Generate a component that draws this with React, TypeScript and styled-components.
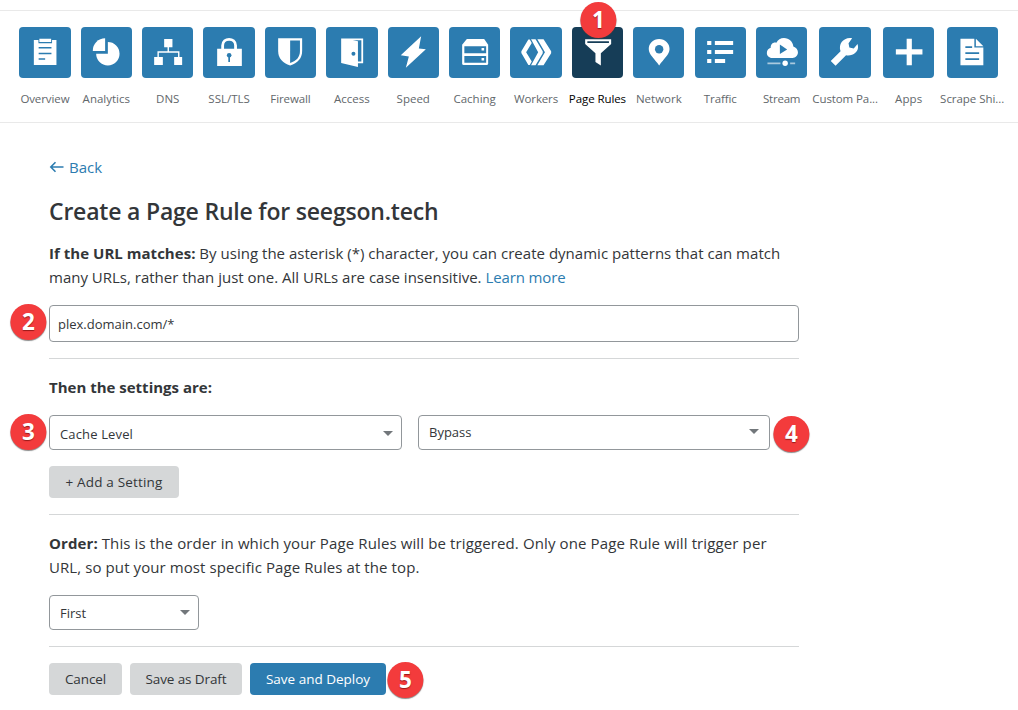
import React from 'react';
import styled, { createGlobalStyle } from 'styled-components';

const blue = '#2c7cb0';
const navy = '#163d57';

const GlobalStyle = createGlobalStyle`
  * { box-sizing: border-box; }
  body {
    margin: 0;
    background: #fff;
    color: #333639;
    font-family: 'Open Sans', 'Noto Sans', sans-serif;
    font-size: 15px;
    line-height: 24px;
  }
`;

const Page = styled.div`
  width: 1018px;
  height: 710px;
  overflow: hidden;
  padding-top: 10px;
`;

const Nav = styled.nav`
  display: flex;
  height: 113px;
  padding: 16px 0 0 14.22px;
  border-top: 1px solid #e9e9e9;
  border-bottom: 1px solid #e9e9e9;
`;

const NavItem = styled.a<{ $wide?: boolean; $active?: boolean }>`
  position: relative;
  flex: none;
  display: flex;
  flex-direction: column;
  align-items: center;
  width: ${p => (p.$wide ? 65.7 : 61.4)}px;
  color: ${p => (p.$active ? '#000' : '#62676b')};
`;

const Tile = styled.svg<{ $active?: boolean }>`
  width: 51.3px;
  height: 51px;
  border-radius: 4px;
  background: ${p => (p.$active ? navy : blue)};
  color: ${p => (p.$active ? navy : blue)};
`;

const NavLabel = styled.span<{ $ls: number }>`
  margin-top: 12px;
  font-size: 11.5px;
  line-height: 18px;
  white-space: nowrap;
  letter-spacing: ${p => p.$ls}px;
`;

const Content = styled.main`
  width: 750px;
  margin: 32px 0 0 49px;
`;

const BackLink = styled.a`
  display: flex;
  align-items: center;
  gap: 5px;
  height: 24px;
  color: ${blue};

  svg {
    margin-bottom: 1px;
  }
`;

const Title = styled.h1`
  margin: 16px 0 13px;
  font-size: 23px;
  font-weight: 600;
  line-height: 33px;
  white-space: nowrap;
`;

const Paragraph = styled.p`
  margin: 0;
  white-space: nowrap;
`;

const Run = styled.span<{ $ls?: number }>`
  letter-spacing: ${p => p.$ls ?? 0}px;
`;

const Strong = styled.strong<{ $ls?: number }>`
  font-weight: 700;
  letter-spacing: ${p => p.$ls ?? 0}px;
`;

const Link = styled.a`
  color: ${blue};
  letter-spacing: -0.12px;
`;

const Anchor = styled.div`
  position: relative;
`;

const UrlInput = styled.div`
  display: flex;
  align-items: center;
  height: 37px;
  margin-top: 16px;
  padding: 1px 8px 0;
  border: 1px solid #92979b;
  border-radius: 4px;
  font-size: 13px;
`;

const Rule = styled.hr`
  height: 1px;
  margin: 16px 0;
  border: 0;
  background: #d5d7d8;
`;

const SelectRow = styled.div`
  position: relative;
  display: flex;
  gap: 16px;
  margin: 16px 0;
`;

const Select = styled.div<{ $width: number; $pad?: string }>`
  display: flex;
  align-items: center;
  justify-content: space-between;
  width: ${p => p.$width}px;
  height: 35px;
  padding: ${p => p.$pad ?? '3px 8px 0 10px'};
  border: 1px solid #92979b;
  border-radius: 4px;
  font-size: 13px;
`;

const Caret = styled.svg<{ $lift: number }>`
  width: 10px;
  height: 5px;
  margin-bottom: ${p => p.$lift}px;
`;

const Button = styled.button<{ $width: number; $primary?: boolean }>`
  width: ${p => p.$width}px;
  height: 32px;
  padding: 0;
  border: 0;
  border-radius: 4px;
  background: ${p => (p.$primary ? blue : '#d5d7d8')};
  color: ${p => (p.$primary ? '#fff' : '#333639')};
  font: 13.5px/32px 'Open Sans', sans-serif;
  white-space: nowrap;
`;

const Actions = styled.div`
  position: relative;
  display: flex;
  gap: 8px;
`;

const Badge = styled.span<{ $x: number; $y: number }>`
  position: absolute;
  left: ${p => p.$x}px;
  top: ${p => p.$y}px;
  width: 36px;
  height: 36px;
  border-radius: 50%;
  background: #f33b3c;
  box-shadow: 0 1px 1px rgba(60, 60, 60, 0.6);
  color: #fff;
  font-size: 22.5px;
  font-weight: 700;
  line-height: 35px;
  text-align: center;
  text-shadow: 0 1px 1px rgba(90, 0, 0, 0.6);
  transform: translateX(0.4px);
`;

const icons: Record<string, React.ReactNode> = {
  overview: (
    <>
      <path d="M14.7 13H37.3V38H14.7z" />
      <path d="M19.3 11H32.9V16.2H19.3z" fill="currentColor" />
      <path d="M20.2 11.8H32V15H20.2z" />
      <path d="M19.5 20.7H32.3M19.5 26.5H32.3M19.5 32H26" stroke="currentColor" strokeWidth="1.6" />
    </>
  ),
  analytics: (
    <>
      <path d="M24 11.3V23.9H11.6A12.4 12.4 0 0 1 24 11.3z" />
      <path d="M26.7 15A11.7 11.7 0 1 1 15 26.7H26.7z" />
    </>
  ),
  dns: (
    <>
      <path d="M22 12H30.3V20.2H22zM12 30H20.7V38H12zM32 30H40V38H32z" />
      <path d="M26.1 20V25M16 30V25H36.6V30" fill="none" stroke="#fff" strokeWidth="1.4" />
    </>
  ),
  lock: (
    <>
      <path d="M14 21.7H38.7V39H14z" />
      <path d="M19.5 22V18.5C19.5 10.2 32.4 10.2 32.4 18.5V22" fill="none" stroke="#fff" strokeWidth="2.8" />
      <circle cx="26" cy="28.2" r="2.3" fill="currentColor" />
      <path d="M26 28V35" stroke="currentColor" strokeWidth="1.7" />
    </>
  ),
  shield: (
    <>
      <path d="M13 11.3H37V24C37 31.5 32.5 36 25 38.4C17.5 36 13 31.5 13 24z" />
      <path d="M25 13.5H34.8V24C34.8 30 31.5 33.7 25 36z" fill="currentColor" />
    </>
  ),
  door: (
    <>
      <path d="M15 11.4H37V36.2H31V34.4H35.2V13.2H24V12.8L31.8 14.3V40L15 36z" />
      <circle cx="27.3" cy="26.7" r="2" fill="currentColor" />
    </>
  ),
  bolt: <path d="M33 9.3L30.7 21.6L37.7 22.2L17.7 40.7L20.7 29.6L12.6 28.3z" />,
  drive: (
    <>
      <path d="M17.7 12H35L39 17.8V36.5Q39 38 37.5 38H14.5Q13 38 13 36.5V17.8z" />
      <path d="M15.2 19.2H37V26.2H15.2zM15.2 29H37V35.8H15.2z" fill="currentColor" />
      <path d="M32.4 21H35V23.6H32.4zM32.4 31H35V33.6H32.4z" />
    </>
  ),
  workers: (
    <>
      <path d="M18.2 12.6H19.6L21.6 16L16 25.2L21.6 34.6L19.6 38H18.2L11.2 26V24.3z" />
      <path d="M20.9 12.3H25.4L32.6 24.2V26.2L25.4 38.2H20.9L28 25.3z" />
      <path d="M27.2 12.3H33.4L41 24.2V26.2L33.4 38.2H27.2L34.8 25.3z" />
    </>
  ),
  funnel: (
    <>
      <path d="M13 12.3H39V17L28.7 26.2V38.4L23.3 35V26.2L13 17z" />
      <path d="M15.2 14.2H36.8V16H15.2z" fill="currentColor" />
    </>
  ),
  pin: (
    <>
      <path d="M26 11.9C32 11.9 36.4 16.3 36.4 22C36.4 27.5 30.5 32 26 38.4C21.5 32 15.6 27.5 15.6 22C15.6 16.3 20 11.9 26 11.9z" />
      <circle cx="26" cy="22.2" r="4.2" fill="currentColor" />
    </>
  ),
  list: <path d="M12 14H16.2V18H12zM19.7 14H38V18H19.7zM12 23H16.2V27H12zM19.7 23H38V27H19.7zM12 32H16.2V36H12zM19.7 32H30V36H19.7z" />,
  stream: (
    <>
      <path d="M16 31C12.8 31 10.7 28.6 10.7 26C10.7 23.3 12.5 21.3 14.6 20.8C14.2 17.3 17.3 14.8 20.2 15.8C21.7 12.6 24.4 10.9 27.8 10.9C33 10.9 36.8 14.6 37.2 19.4C40 20.3 41.8 22.5 41.8 25.3C41.8 28.6 39.3 31 36.4 31z" />
      <path d="M23.7 17.6L31 22.4L23.7 27.1z" fill="currentColor" />
      <path d="M11.3 36.3H24.3M34 36.3H39" stroke="#fff" strokeOpacity="0.6" strokeWidth="1.8" />
      <circle cx="29" cy="36.3" r="2.7" />
    </>
  ),
  wrench: (
    <path d="M33 11.3L29.4 16.2L30.2 20.4L34.6 21.4L38.4 16.9C39.6 20.3 38.8 23.6 36.2 25.8C33.8 27.9 30.5 28.9 26.9 28.3L16.4 38.7L11.6 34L21.4 24.2C18.8 17 24.6 9.8 33 11.3z" />
  ),
  plus: <path d="M23.5 11.7H28.7V22.3H39.3V27.6H28.7V38.3H23.5V27.6H12.7V22.3H23.5z" />,
  doc: (
    <>
      <path d="M13.3 11.7H27.2V20.6H36.2V38.2H13.3z" />
      <path d="M28.7 11.7L36.2 19.2H28.7z" />
      <path d="M18.2 20.2H25M18.2 26.2H32M18.2 32.1H32" stroke="currentColor" strokeWidth="1.7" />
    </>
  ),
};

type Entry = { icon: string; label: string; ls?: number; wide?: boolean; active?: boolean };

const entries: Entry[] = [
  { icon: 'overview', label: 'Overview', ls: -0.1 },
  { icon: 'analytics', label: 'Analytics' },
  { icon: 'dns', label: 'DNS' },
  { icon: 'lock', label: 'SSL/TLS' },
  { icon: 'shield', label: 'Firewall', ls: -0.1 },
  { icon: 'door', label: 'Access' },
  { icon: 'bolt', label: 'Speed' },
  { icon: 'drive', label: 'Caching' },
  { icon: 'workers', label: 'Workers', ls: -0.15 },
  { icon: 'funnel', label: 'Page Rules', ls: -0.08, active: true },
  { icon: 'pin', label: 'Network' },
  { icon: 'list', label: 'Traffic', ls: -0.12 },
  { icon: 'stream', label: 'Stream', ls: -0.2 },
  { icon: 'wrench', label: 'Custom Pa...', ls: -0.1, wide: true },
  { icon: 'plus', label: 'Apps', ls: 0.1 },
  { icon: 'doc', label: 'Scrape Shi...', ls: -0.04, wide: true },
];

const DropArrow = ({ lift = 2 }: { lift?: number }) => (
  <Caret viewBox="0 0 10 5" $lift={lift}>
    <path d="M0 0H10L5 5z" fill="#72777b" />
  </Caret>
);

export default function App() {
  return (
    <Page>
      <GlobalStyle />
      <Nav>
        {entries.map(e => (
          <NavItem key={e.label} $wide={e.wide} $active={e.active}>
            <Tile viewBox="0 0 51 51" fill="#fff" $active={e.active}>
              {icons[e.icon]}
            </Tile>
            {e.active && <Badge $x={13.2} $y={-25.5}>1</Badge>}
            <NavLabel $ls={e.ls ?? 0}>{e.label}</NavLabel>
          </NavItem>
        ))}
      </Nav>
      <Content>
        <BackLink>
          <svg width="15" height="12" viewBox="0 0 15 12" fill="none" stroke={blue} strokeWidth="1.6">
            <path d="M14.5 6H2M6.5 1.2L1.8 6L6.5 10.8" />
          </svg>
          <Run>Back</Run>
        </BackLink>
        <Title>
          <Run $ls={-0.2}>Create a Page Rule for seegson.tech</Run>
        </Title>
        <Paragraph>
          <Strong $ls={0.03}>If the URL matches:</Strong>{' '}
          <Run $ls={0.02}>By using the asterisk (*) character, you can create dynamic patterns that can match</Run>
          <br />
          <Run>many URLs, rather than just one. All URLs are case insensitive.</Run>{' '}
          <Link>Learn more</Link>
        </Paragraph>
        <Anchor>
          <Badge $x={-39} $y={-1}>2</Badge>
          <UrlInput>
            <Run>plex.domain.com/*</Run>
          </UrlInput>
        </Anchor>
        <Rule />
        <Paragraph>
          <Strong>Then the settings are:</Strong>
        </Paragraph>
        <SelectRow>
          <Badge $x={-39} $y={-1}>3</Badge>
          <Select $width={353}>
            <Run $ls={0.14}>Cache Level</Run>
            <DropArrow />
          </Select>
          <Select $width={352} $pad="0 10px 1px">
            <Run>Bypass</Run>
            <DropArrow lift={1} />
          </Select>
          <Badge $x={724} $y={1}>4</Badge>
        </SelectRow>
        <Button $width={130}>
          <Run $ls={0.17}>+ Add a Setting</Run>
        </Button>
        <Rule />
        <Paragraph>
          <Strong $ls={0.1}>Order:</Strong>{' '}
          <Run $ls={0.12}>This is the order in which your Page Rules will be triggered. Only one Page Rule will trigger per</Run>
          <br />
          <Run $ls={0.09}>URL, so put your most specific Page Rules at the top.</Run>
        </Paragraph>
        <SelectRow>
          <Select $width={150} $pad="1px 8px 0 10px">
            <Run>First</Run>
            <DropArrow lift={1} />
          </Select>
        </SelectRow>
        <Rule />
        <Actions>
          <Button $width={73}>
            <Run $ls={-0.1}>Cancel</Run>
          </Button>
          <Button $width={112}>
            <Run $ls={-0.1}>Save as Draft</Run>
          </Button>
          <Button $width={136} $primary>
            <Run>Save and Deploy</Run>
          </Button>
          <Badge $x={338} $y={-1}>5</Badge>
        </Actions>
      </Content>
    </Page>
  );
}
